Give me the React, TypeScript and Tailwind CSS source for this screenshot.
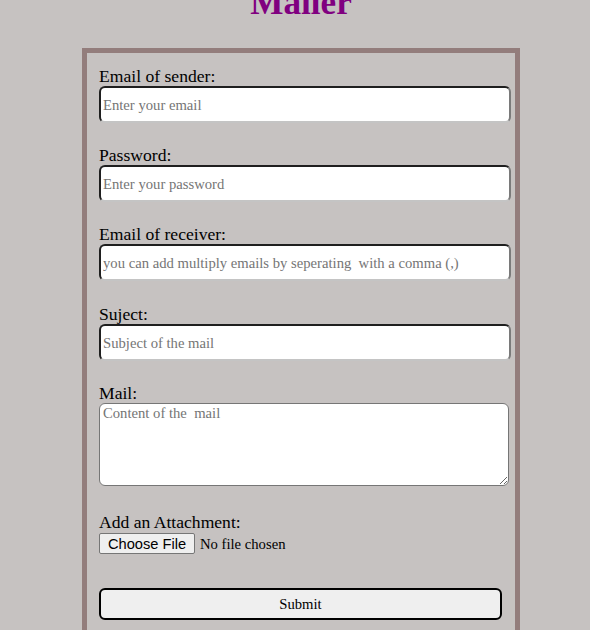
'use client';

/**
 * Mailer form
 *
 * Single bordered card with sender/receiver fields, message body,
 * attachment picker and a submit button.
 */

const serif = "font-['Liberation_Serif','Times_New_Roman',serif]";

interface FieldProps {
  label: string;
  placeholder: string;
  type?: string;
  gap?: string;
}

function Field({ label, placeholder, type = 'text', gap = 'mb-[22px]' }: FieldProps) {
  return (
    <div className={gap}>
      <label className="block h-[20px] text-[17.6px] leading-[20px] text-black">{label}</label>
      <input
        type={type}
        placeholder={placeholder}
        className="block h-[37px] w-[412px] rounded-[6px] border-2 border-t-[#1f1f1f] border-l-[#1f1f1f] border-r-[#7a7a7a] border-b-[#c4c4c4] bg-white px-[2px] pt-[1px] text-[14.67px] text-black outline-none placeholder:text-[#757575]"
      />
    </div>
  );
}

export default function App() {
  return (
    <div className={`min-h-[630px] w-full overflow-hidden bg-[#c6c2c1] ${serif}`}>
      <div className="ml-[82px] w-[438px]">
        {/* Title */}
        <h1 className="-mt-[15px] h-[35px] text-center text-[35.2px] font-bold leading-none text-[#800080]">
          Mailer
        </h1>

        {/* Form card */}
        <form
          className="mt-[28px] border-[5px] border-[#937d7c] pl-[12px] pr-[4px] pt-[13px] pb-[20px]"
          onSubmit={(e) => e.preventDefault()}
        >
          <Field label="Email of sender:" placeholder="Enter your email" type="email" />
          <Field label="Password:" placeholder="Enter your password" type="password" />
          <Field
            label="Email of receiver:"
            placeholder="you can add multiply emails by seperating  with a comma (,)"
            gap="mb-[23px]"
          />
          <Field label="Suject:" placeholder="Subject of the mail" />

          {/* Mail body */}
          <div className="mb-[26px]">
            <label className="block h-[20px] text-[17.6px] leading-[20px] text-black">Mail:</label>
            <textarea
              placeholder="Content of the  mail"
              className="block h-[83px] w-[410px] resize rounded-[6px] border border-[#767676] bg-white px-[3px] py-[1px] text-[14.67px] leading-[17px] text-black outline-none placeholder:text-[#757575]"
            />
          </div>

          {/* Attachment */}
          <div className="mb-[34px]">
            <label className="block h-[20px] text-[17.6px] leading-[20px] text-black">
              Add an Attachment:
            </label>
            <div className="mt-[1px] flex h-[21px] items-center">
              <span className="flex h-[21px] w-[96px] items-center justify-center rounded-[2px] border border-[#767676] bg-[#efefef] font-['Liberation_Sans',Arial,sans-serif] text-[14.67px] text-black">
                Choose File
              </span>
              <span className="ml-[5px] text-[14.67px] text-black">No file chosen</span>
            </div>
          </div>

          <button
            type="submit"
            className="block h-[32px] w-[403px] rounded-[6px] border-2 border-black bg-[#efefef] text-center text-[14.67px] text-black"
          >
            Submit
          </button>
        </form>
      </div>
    </div>
  );
}
